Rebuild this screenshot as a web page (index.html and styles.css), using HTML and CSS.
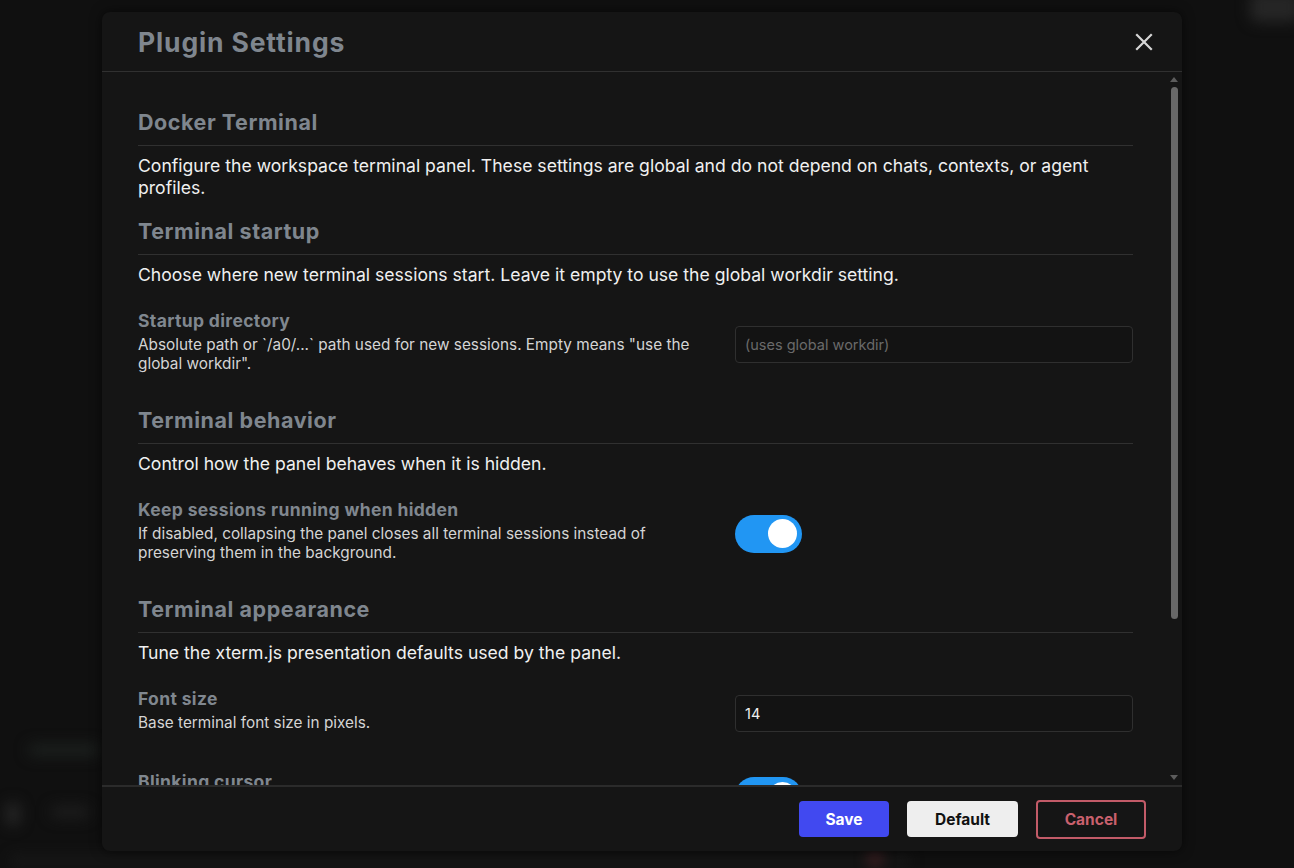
FILE: index.html
```html
<!DOCTYPE html>
<html lang="en">
<head>
	<title>Plugin Settings</title>
	<meta charset="utf-8" />
	<link rel="stylesheet" href="styles.css">
</head>
<body>
<div class="backdrop">
	<div class="blur blur-top"></div>
	<div class="blur blur-label"></div>
	<div class="blur blur-icon"></div>
	<div class="blur blur-text"></div>
	<div class="blur blur-row"></div>
	<div class="blur blur-dot"></div>
</div>

<section class="modal">
	<header class="modal-head">
		<h1>Plugin Settings</h1>
		<button class="close" aria-label="Close">
			<svg width="18" height="18" viewBox="0 0 18 18"><path d="M2 2L16 16M16 2L2 16" stroke="#d6d6d6" stroke-width="2.2" stroke-linecap="square"/></svg>
		</button>
	</header>

	<div class="modal-main">
		<div class="modal-body">
			<div class="section">
				<h2>Docker Terminal</h2>
				<p class="section-desc">Configure the workspace terminal panel. These settings are global and do not depend on chats, contexts, or agent profiles.</p>
			</div>

			<div class="section">
				<h2>Terminal startup</h2>
				<p class="section-desc">Choose where new terminal sessions start. Leave it empty to use the global workdir setting.</p>
				<div class="field">
					<div class="field-text">
						<div class="field-title">Startup directory</div>
						<div class="field-desc">Absolute path or `/a0/...` path used for new sessions. Empty means "use the global workdir".</div>
					</div>
					<div class="field-control">
						<input type="text" class="input" placeholder="(uses global workdir)">
					</div>
				</div>
			</div>

			<div class="section">
				<h2>Terminal behavior</h2>
				<p class="section-desc">Control how the panel behaves when it is hidden.</p>
				<div class="field">
					<div class="field-text">
						<div class="field-title">Keep sessions running when hidden</div>
						<div class="field-desc">If disabled, collapsing the panel closes all terminal sessions instead of preserving them in the background.</div>
					</div>
					<div class="field-control">
						<span class="toggle on"><span class="knob"></span></span>
					</div>
				</div>
			</div>

			<div class="section">
				<h2>Terminal appearance</h2>
				<p class="section-desc">Tune the xterm.js presentation defaults used by the panel.</p>
				<div class="field">
					<div class="field-text">
						<div class="field-title">Font size</div>
						<div class="field-desc">Base terminal font size in pixels.</div>
					</div>
					<div class="field-control">
						<input type="text" class="input" value="14">
					</div>
				</div>
				<div class="field">
					<div class="field-text">
						<div class="field-title">Blinking cursor</div>
						<div class="field-desc">Make the terminal cursor blink while the panel is focused.</div>
					</div>
					<div class="field-control">
						<span class="toggle on"><span class="knob"></span></span>
					</div>
				</div>
			</div>
		</div>

		<div class="scrollbar">
			<span class="arrow arrow-up"></span>
			<div class="track"><div class="thumb"></div></div>
			<span class="arrow arrow-down"></span>
		</div>
	</div>

	<footer class="modal-foot">
		<button class="btn btn-save">Save</button>
		<button class="btn btn-default">Default</button>
		<button class="btn btn-cancel">Cancel</button>
	</footer>
</section>
</body>
</html>
```

FILE: styles.css
```css
html, body {
	margin: 0;
	padding: 0;
	height: 868px;
	overflow: hidden;
}
body {
	background-color: #101010;
	font-family: Inter, "Noto Sans", sans-serif;
	color: #ececec;
	position: relative;
}

/* blurred app behind the dialog */
.backdrop {
	position: absolute;
	top: 0;
	left: 0;
	width: 100%;
	height: 100%;
}
.blur {
	position: absolute;
	filter: blur(7px);
	background-color: #2a2a2a;
	border-radius: 8px;
}
.blur-top { left: 1250px; top: -8px; width: 50px; height: 30px; background-color: #262626; }
.blur-label { left: 28px; top: 744px; width: 72px; height: 12px; background-color: #1c201e; }
.blur-icon { left: 6px; top: 802px; width: 14px; height: 24px; background-color: #262626; }
.blur-text { left: 50px; top: 806px; width: 40px; height: 12px; background-color: #1d1d1d; }
.blur-row { left: 10px; top: 856px; width: 900px; height: 10px; background-color: #191919; }
.blur-dot { left: 868px; top: 852px; width: 14px; height: 14px; border-radius: 50%; background-color: #4a2226; }

.modal {
	position: relative;
	margin: 12px 0 0 102px;
	width: 1080px;
	height: 839px;
	background-color: #151515;
	border-radius: 8px;
	box-shadow: 0 0 12px rgba(0,0,0,0.6);
	display: flex;
	flex-direction: column;
	overflow: hidden;
}

.modal-head {
	height: 59px;
	border-bottom: 1px solid #303030;
	display: flex;
	align-items: center;
	justify-content: space-between;
	padding: 0 25px 0 36px;
	flex: none;
}
.modal-head h1 {
	margin: 0;
	font-size: 26.5px;
	font-weight: 700;
	color: #7f868e;
	letter-spacing: 0.85px;
}
.close {
	background: none;
	border: 0;
	padding: 4px;
	display: flex;
	cursor: pointer;
}

.modal-main {
	flex: 1;
	display: flex;
	min-height: 0;
}
.modal-body {
	flex: 1;
	overflow: hidden;
	padding: 18px 33px 0 36px;
}

/* scrollbar drawn like the dark native one */
.scrollbar {
	flex: none;
	width: 16px;
	display: flex;
	flex-direction: column;
	align-items: center;
	padding: 5px 0 5px;
	box-sizing: border-box;
}
.arrow {
	width: 0;
	height: 0;
	border-left: 4px solid transparent;
	border-right: 4px solid transparent;
}
.arrow-up {
	border-bottom: 5px solid #5c5c5c;
}
.arrow-down {
	border-top: 5px solid #5c5c5c;
}
.track {
	flex: 1;
	width: 7px;
	padding: 5px 0;
}
.thumb {
	height: 532px;
	border-radius: 4px;
	background-color: #686868;
}

.section h2 {
	margin: 18px 0 0;
	padding-bottom: 9px;
	border-bottom: 1px solid #303030;
	font-size: 21.5px;
	line-height: 28px;
	font-weight: 700;
	color: #7f868e;
	letter-spacing: 0.55px;
}
.section-desc {
	margin: 9px 0 0;
	font-size: 17.6px;
	line-height: 22px;
	color: #f0f0f0;
}

.field {
	display: grid;
	grid-template-columns: 1fr 398px;
	column-gap: 36px;
	align-items: center;
	padding: 24px 0 15px;
}
.field-title {
	font-size: 17.5px;
	line-height: 22px;
	font-weight: 700;
	color: #80878f;
	letter-spacing: 0.35px;
}
.field-desc {
	margin-top: 3px;
	font-size: 15.35px;
	line-height: 19px;
	color: #d4d4d4;
}
.field-control {
	display: flex;
	margin-top: 6px;
}

.input {
	width: 100%;
	height: 37px;
	box-sizing: border-box;
	background-color: #131313;
	border: 1px solid #2f2f2f;
	border-radius: 4px;
	padding: 0 9px;
	font: 14.5px Inter, "Noto Sans", sans-serif;
	color: #f0f0f0;
	outline: none;
}
.input::placeholder {
	color: #6a6a6a;
}

.toggle {
	width: 67px;
	height: 38px;
	border-radius: 19px;
	background-color: #2196f3;
	position: relative;
	display: block;
}
.toggle .knob {
	position: absolute;
	top: 4.5px;
	right: 5px;
	width: 29px;
	height: 29px;
	border-radius: 50%;
	background-color: #fff;
}

.modal-foot {
	flex: none;
	height: 64px;
	border-top: 2px solid #2b2b2b;
	display: flex;
	align-items: center;
	justify-content: flex-end;
	gap: 18px;
	padding-right: 36px;
}
.btn {
	height: 36px;
	border-radius: 4px;
	font: 700 15.5px Inter, "Noto Sans", sans-serif;
	border: 0;
	cursor: pointer;
}
.btn-save {
	width: 90px;
	background-color: #4149f0;
	color: #fff;
}
.btn-default {
	width: 111px;
	background-color: #eeeeee;
	color: #111;
}
.btn-cancel {
	width: 110px;
	height: 39px;
	background: none;
	border: 2px solid #c25b68;
	color: #c9606d;
}
```
